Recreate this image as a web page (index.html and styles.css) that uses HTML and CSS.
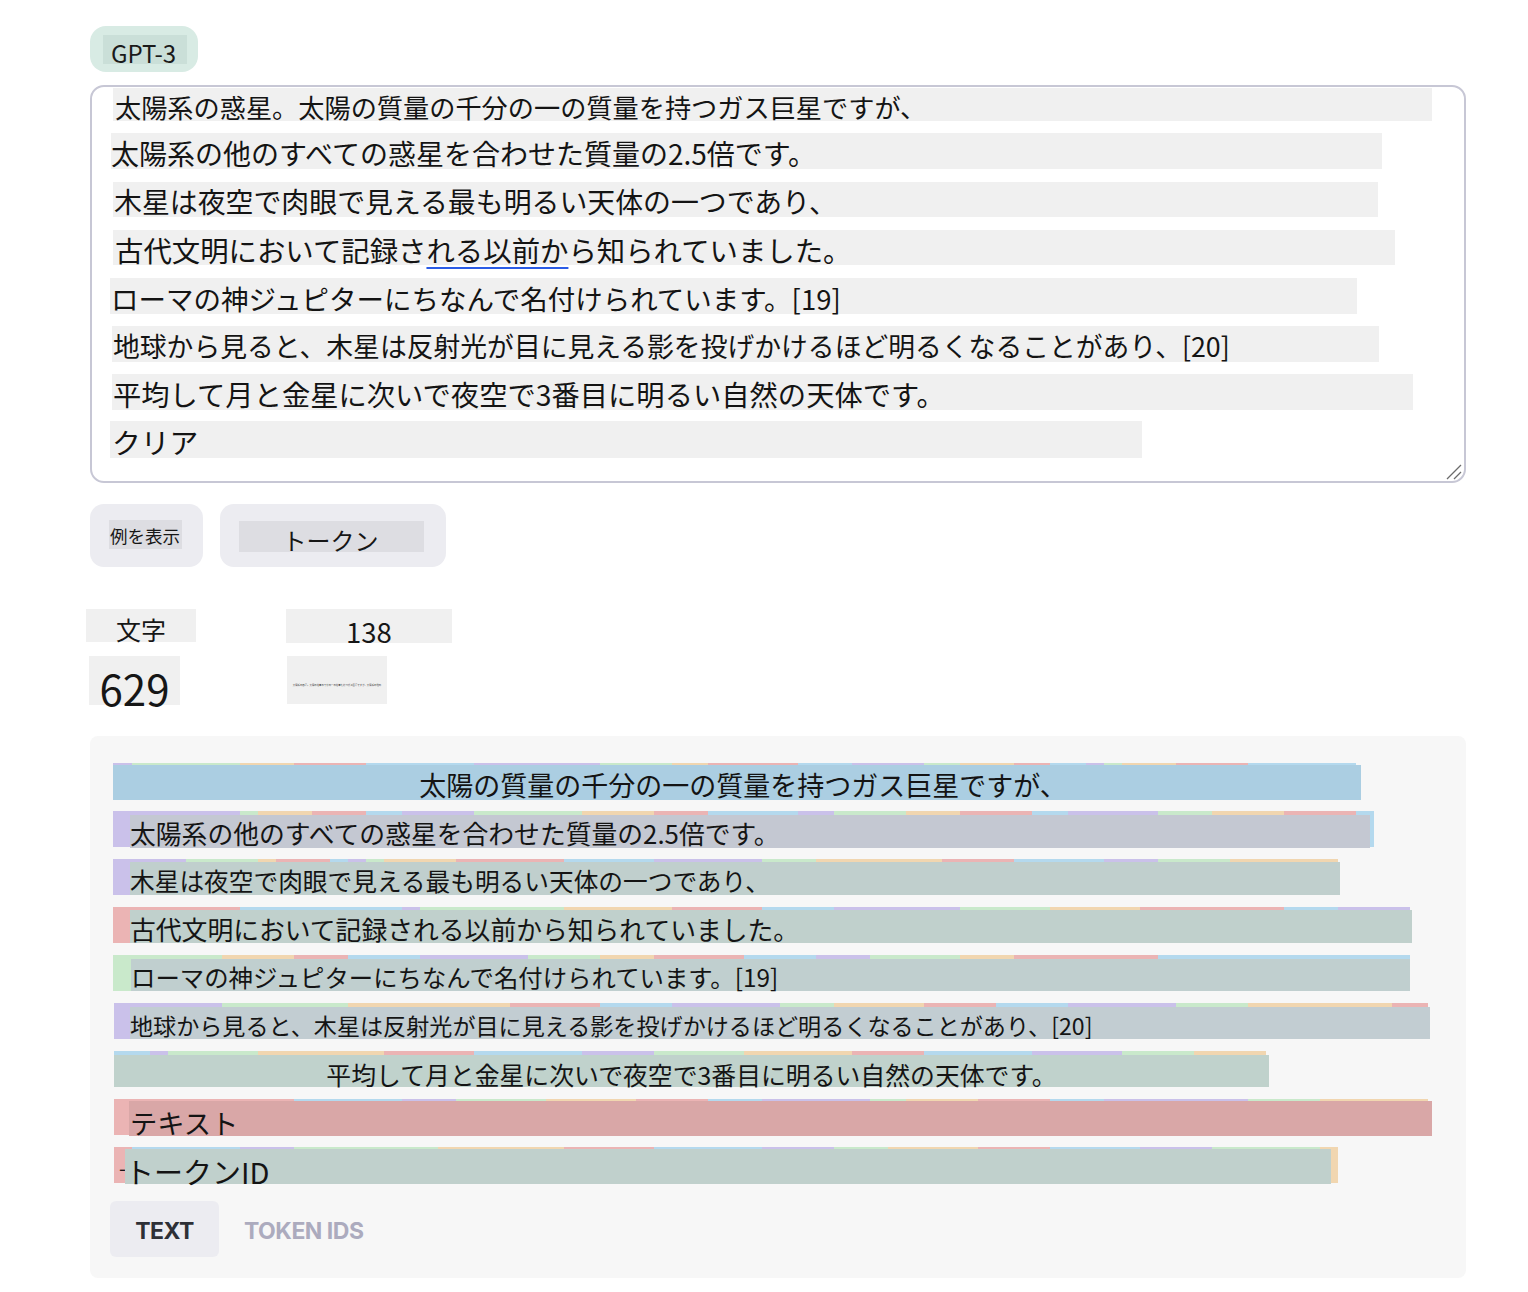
FILE: index.html
```html
<!DOCTYPE html>
<html lang="ja">
<head>
<meta charset="utf-8">
<title>Tokenizer</title>
<link rel="stylesheet" href="styles.css">
</head>
<body>
<div class="page">
  <div class="badge"><span class="badge-in">GPT-3</span></div>

  <div class="editor">
    <div class="tl t1">太陽系の惑星。太陽の質量の千分の一の質量を持つガス巨星ですが、</div>
    <div class="tl t2">太陽系の他のすべての惑星を合わせた質量の2.5倍です。</div>
    <div class="tl t3">木星は夜空で肉眼で見える最も明るい天体の一つであり、</div>
    <div class="tl t4">古代文明において記録さ<span class="spell">れる以前か</span>ら知られていました。</div>
    <div class="tl t5">ローマの神ジュピターにちなんで名付けられています。[19]</div>
    <div class="tl t6">地球から見ると、木星は反射光が目に見える影を投げかけるほど明るくなることがあり、[20]</div>
    <div class="tl t7">平均して月と金星に次いで夜空で3番目に明るい自然の天体です。</div>
    <div class="tl t8">クリア</div>
    <svg class="grip" width="16" height="16" viewBox="0 0 16 16"><path d="M1 15 L15 1 M8 15 L15 8" stroke="#6b6b6b" stroke-width="1.3" fill="none"/></svg>
  </div>

  <div class="actions">
    <button class="btn btn-ex"><span class="btn-in">例を表示</span></button>
    <button class="btn btn-tok"><span class="btn-in">トークン</span></button>
  </div>

  <div class="stats">
    <div class="st st-a">文字</div>
    <div class="st st-b">138</div>
    <div class="st st-c">629</div>
    <div class="st st-d"><span class="tiny">太陽系の惑星。太陽の質量の千分の一の質量を持つガス巨星ですが、太陽系の他の</span></div>
  </div>

  <div class="panel">
    <div class="tlines">
      <div class="tk k1">
        <div class="layer"><i class="p" style="width:19px"></i><i class="g" style="width:108px"></i><i class="o" style="width:54px"></i><i class="r" style="width:72px"></i><i class="b" style="width:108px"></i><i class="p" style="width:126px"></i><i class="g" style="width:72px"></i><i class="o" style="width:36px"></i><i class="r" style="width:90px"></i><i class="b" style="width:54px"></i><i class="p" style="width:72px"></i><i class="g" style="width:36px"></i><i class="o" style="width:54px"></i><i class="r" style="width:36px"></i><i class="b" style="width:36px"></i><i class="p" style="width:18px"></i><i class="g" style="width:18px"></i><i class="o" style="width:54px"></i><i class="r" style="width:72px"></i><i class="b" style="width:108px"></i></div>
        <div class="ov">太陽の質量の千分の一の質量を持つガス巨星ですが、</div>
      </div>
      <div class="tk k2">
        <div class="layer"><i class="p" style="width:127px"></i><i class="g" style="width:18px"></i><i class="o" style="width:54px"></i><i class="r" style="width:54px"></i><i class="b" style="width:36px"></i><i class="p" style="width:72px"></i><i class="g" style="width:108px"></i><i class="o" style="width:72px"></i><i class="r" style="width:54px"></i><i class="b" style="width:90px"></i><i class="p" style="width:36px"></i><i class="g" style="width:72px"></i><i class="o" style="width:54px"></i><i class="r" style="width:72px"></i><i class="b" style="width:36px"></i><i class="p" style="width:90px"></i><i class="g" style="width:54px"></i><i class="o" style="width:72px"></i><i class="r" style="width:72px"></i><i class="b" style="width:18px"></i></div>
        <div class="ov">太陽系の他のすべての惑星を合わせた質量の2.5倍です。</div>
      </div>
      <div class="tk k3">
        <div class="layer"><i class="p" style="width:73px"></i><i class="g" style="width:72px"></i><i class="o" style="width:18px"></i><i class="r" style="width:54px"></i><i class="b" style="width:18px"></i><i class="p" style="width:18px"></i><i class="g" style="width:18px"></i><i class="o" style="width:72px"></i><i class="r" style="width:108px"></i><i class="b" style="width:90px"></i><i class="p" style="width:108px"></i><i class="g" style="width:54px"></i><i class="o" style="width:126px"></i><i class="r" style="width:72px"></i><i class="b" style="width:90px"></i><i class="p" style="width:54px"></i><i class="g" style="width:72px"></i><i class="o" style="width:108px"></i></div>
        <div class="ov">木星は夜空で肉眼で見える最も明るい天体の一つであり、</div>
      </div>
      <div class="tk k4">
        <div class="layer"><i class="r" style="width:127px"></i><i class="b" style="width:162px"></i><i class="p" style="width:18px"></i><i class="g" style="width:144px"></i><i class="o" style="width:108px"></i><i class="r" style="width:90px"></i><i class="b" style="width:72px"></i><i class="p" style="width:126px"></i><i class="g" style="width:90px"></i><i class="o" style="width:90px"></i><i class="r" style="width:144px"></i><i class="b" style="width:54px"></i><i class="p" style="width:72px"></i></div>
        <div class="ov">古代文明において記録される以前から知られていました。</div>
      </div>
      <div class="tk k5">
        <div class="layer"><i class="g" style="width:109px"></i><i class="o" style="width:72px"></i><i class="r" style="width:54px"></i><i class="b" style="width:72px"></i><i class="p" style="width:108px"></i><i class="g" style="width:72px"></i><i class="o" style="width:54px"></i><i class="r" style="width:90px"></i><i class="b" style="width:72px"></i><i class="p" style="width:54px"></i><i class="g" style="width:90px"></i><i class="o" style="width:54px"></i><i class="r" style="width:144px"></i><i class="b" style="width:252px"></i></div>
        <div class="ov">ローマの神ジュピターにちなんで名付けられています。[19]</div>
      </div>
      <div class="tk k6">
        <div class="layer"><i class="p" style="width:108px"></i><i class="g" style="width:126px"></i><i class="o" style="width:162px"></i><i class="r" style="width:90px"></i><i class="b" style="width:72px"></i><i class="p" style="width:108px"></i><i class="g" style="width:54px"></i><i class="o" style="width:90px"></i><i class="r" style="width:72px"></i><i class="b" style="width:72px"></i><i class="p" style="width:108px"></i><i class="g" style="width:72px"></i><i class="o" style="width:144px"></i><i class="r" style="width:36px"></i></div>
        <div class="ov">地球から見ると、木星は反射光が目に見える影を投げかけるほど明るくなることがあり、[20]</div>
      </div>
      <div class="tk k7">
        <div class="layer"><i class="b" style="width:36px"></i><i class="p" style="width:18px"></i><i class="g" style="width:90px"></i><i class="o" style="width:126px"></i><i class="r" style="width:90px"></i><i class="b" style="width:108px"></i><i class="p" style="width:72px"></i><i class="g" style="width:90px"></i><i class="o" style="width:108px"></i><i class="r" style="width:72px"></i><i class="b" style="width:108px"></i><i class="p" style="width:90px"></i><i class="g" style="width:72px"></i><i class="o" style="width:72px"></i></div>
        <div class="ov">平均して月と金星に次いで夜空で3番目に明るい自然の天体です。</div>
      </div>
      <div class="tk k8">
        <div class="layer"><i class="r" style="width:180px"></i><i class="b" style="width:108px"></i><i class="p" style="width:54px"></i><i class="g" style="width:90px"></i><i class="o" style="width:90px"></i><i class="r" style="width:72px"></i><i class="b" style="width:54px"></i><i class="p" style="width:108px"></i><i class="g" style="width:36px"></i><i class="o" style="width:72px"></i><i class="r" style="width:72px"></i><i class="b" style="width:54px"></i><i class="p" style="width:144px"></i><i class="g" style="width:72px"></i><i class="o" style="width:108px"></i></div>
        <div class="ov">テキスト</div>
      </div>
      <div class="tk k9">
        <div class="layer"><i class="r" style="width:18px"><span class="peek">-</span></i><i class="b" style="width:108px"></i><i class="p" style="width:54px"></i><i class="g" style="width:144px"></i><i class="o" style="width:126px"></i><i class="r" style="width:90px"></i><i class="b" style="width:108px"></i><i class="p" style="width:72px"></i><i class="g" style="width:54px"></i><i class="o" style="width:90px"></i><i class="r" style="width:72px"></i><i class="b" style="width:90px"></i><i class="p" style="width:72px"></i><i class="g" style="width:108px"></i><i class="o" style="width:18px"></i></div>
        <div class="ov">トークンID</div>
      </div>
    </div>

    <div class="tabs">
      <button class="tab active">TEXT</button>
      <button class="tab">TOKEN IDS</button>
    </div>
  </div>
</div>
</body>
</html>
```

FILE: styles.css
```css
* { box-sizing: border-box; }

html, body {
  margin: 0;
  padding: 0;
  background: #ffffff;
}

body {
  font-family: "Noto Sans CJK JP", "Noto Sans", sans-serif;
  color: #161616;
}

.page {
  width: 1528px;
  padding: 26px 62px 0 90px;
}

/* model badge */
.badge {
  width: 108px;
  height: 46px;
  background: #d8ebe4;
  border-radius: 16px;
  padding: 9px 0 0 13px;
}
.badge-in {
  display: block;
  width: 84px;
  height: 29px;
  background: #cadfd8;
  font-size: 24px;
  line-height: 36px;
  padding-left: 8px;
  white-space: nowrap;
  color: #1a1a1a;
}

/* editor */
.editor {
  position: relative;
  margin-top: 13px;
  width: 1376px;
  height: 398px;
  border: 2px solid #c7c7d5;
  border-radius: 14px;
  padding-top: 1px;
  display: flex;
  flex-direction: column;
  align-items: flex-start;
}
.tl {
  background: #f0f0f0;
  font-size: 28px;
  white-space: nowrap;
  padding-left: 2px;
  color: #141414;
}
.t1 { margin-left: 21px; width: 1319px; height: 33px; line-height: 38px; font-size: 26.2px; }
.t2 { margin-left: 19px; width: 1271px; height: 36px; line-height: 40px; margin-top: 12px; padding-left: 0; font-size: 28px; }
.t3 { margin-left: 21px; width: 1265px; height: 35px; line-height: 39px; margin-top: 13px; font-size: 27.9px; padding-left: 1px; }
.t4 { margin-left: 21px; width: 1282px; height: 35px; line-height: 39px; margin-top: 13px; font-size: 28.4px; }
.t5 { margin-left: 18px; width: 1247px; height: 36px; line-height: 40px; margin-top: 13px; font-size: 27.5px; padding-left: 1px; }
.t6 { margin-left: 20px; width: 1267px; height: 36px; line-height: 40px; margin-top: 12px; font-size: 26.8px; padding-left: 1px; }
.t7 { margin-left: 20px; width: 1301px; height: 36px; line-height: 40px; margin-top: 12px; font-size: 28.3px; padding-left: 1px; }
.t8 { margin-left: 18px; width: 1032px; height: 37px; line-height: 42px; margin-top: 11px; font-size: 28.8px; }

.spell {
  text-decoration: underline;
  text-decoration-color: #2b5ce6;
  text-decoration-thickness: 2px;
  text-underline-offset: 5px;
}

.grip {
  position: absolute;
  right: 2px;
  bottom: 1px;
}

/* buttons */
.actions {
  display: flex;
  gap: 17px;
  margin-top: 21px;
}
.btn {
  border: none;
  background: #ececf1;
  border-radius: 14px;
  height: 63px;
  padding: 0 0 0 19px;
  font-family: inherit;
  color: #161616;
  text-align: left;
  display: flex;
  align-items: flex-start;
}
.btn-ex { width: 113px; padding-top: 16px; }
.btn-tok { width: 226px; padding-top: 17px; }
.btn-in {
  display: block;
  background: #dddde2;
  white-space: nowrap;
}
.btn-ex .btn-in {
  width: 73px;
  height: 29px;
  font-size: 17.5px;
  line-height: 32px;
  padding-left: 1px;
}
.btn-tok .btn-in {
  width: 185px;
  height: 31px;
  font-size: 24px;
  line-height: 38px;
  text-align: center;
  padding-right: 2px;
}

/* stats */
.stats {
  margin-top: 42px;
  margin-left: -4px;
  display: grid;
  grid-template-columns: 200px 200px;
  row-gap: 13px;
  align-items: start;
}
.st {
  background: #f0f0f0;
  text-align: center;
  white-space: nowrap;
}
.st-a { width: 110px; height: 33px; font-size: 25px; line-height: 40px; }
.st-b { width: 166px; height: 34px; font-size: 27.5px; line-height: 44px; }
.st-c { width: 91px; height: 49px; margin-left: 3px; font-size: 42px; line-height: 64px; }
.st-d { width: 100px; height: 48px; margin-left: 1px; line-height: 46px; overflow: hidden; }
.tiny { font-size: 2.4px; color: #333; }

/* token panel */
.panel {
  margin-top: 31px;
  width: 1376px;
  height: 542px;
  background: #f7f7f7;
  border-radius: 8px;
  padding: 27px 0 0 23px;
}
.tlines {
  display: flex;
  flex-direction: column;
  gap: 12px;
}
.tk {
  display: grid;
  grid-template-rows: 36px;
  height: 36px;
}
.layer, .ov {
  grid-area: 1 / 1;
}
.layer {
  display: flex;
  height: 36px;
}
.layer i {
  display: block;
  height: 36px;
  flex: none;
  position: relative;
}
.layer .p { background: #cac1ea; }
.layer .g { background: #c9e9cb; }
.layer .o { background: #f1d6b0; }
.layer .r { background: #ebb4b4; }
.layer .b { background: #b4d9ee; }

.peek {
  position: absolute;
  left: 5px;
  top: 0;
  font-style: normal;
  font-size: 20px;
  line-height: 42px;
}

.ov {
  position: relative;
  z-index: 1;
  white-space: nowrap;
  color: #141414;
}
.k1 .ov { margin-top: 2px; width: 1248px; height: 35px; background: #abcee2; font-size: 27px; line-height: 40px; text-align: center; padding-left: 12px; }
.k2 .ov { margin: 4px 0 0 17px; width: 1240px; height: 33px; background: #c4c8d2; font-size: 25.8px; line-height: 36px; }
.k3 .ov { margin: 3px 0 0 17px; width: 1210px; height: 33px; background: #c0cfcd; font-size: 24.7px; line-height: 36px; }
.k4 .ov { margin: 3px 0 0 17px; width: 1282px; height: 33px; background: #c0d0cc; font-size: 25.8px; line-height: 38px; }
.k5 .ov { margin: 4px 0 0 18px; width: 1279px; height: 32px; background: #c0cfcf; font-size: 24.4px; line-height: 36px; }
.k6 { margin-left: 1px; }
.k6 .ov { margin: 4px 0 0 16px; width: 1300px; height: 32px; background: #c2cdd2; font-size: 23.1px; line-height: 36px; }
.k7 { margin-left: 1px; }
.k7 .ov { margin: 4px 0 0 0; width: 1155px; height: 32px; background: #c0d2cc; font-size: 24.85px; line-height: 38px; text-align: center; }
.k8 { margin-left: 1px; }
.k8 .ov { margin: 2px 0 0 15px; width: 1303px; height: 35px; background: #d9a7a7; font-size: 27.3px; line-height: 42px; padding-left: 1px; }
.k9 { margin-left: 1px; }
.k9 .ov { margin: 2px 0 0 11px; width: 1206px; height: 35px; background: #c0d0cc; font-size: 29px; line-height: 44px; padding-left: 0; }

/* tabs */
.tabs {
  display: flex;
  margin-top: 18px;
  margin-left: -3px;
}
.tab {
  border: none;
  background: transparent;
  height: 56px;
  padding: 3px 25px 0;
  border-radius: 6px;
  font-family: "Inter", "Liberation Sans", sans-serif;
  font-weight: 700;
  font-size: 23px;
  letter-spacing: -0.5px;
  color: #acabbe;
}
.tab.active {
  width: 109px;
  background: #ececf1;
  color: #2e3036;
  padding: 3px 0 0;
}
```
